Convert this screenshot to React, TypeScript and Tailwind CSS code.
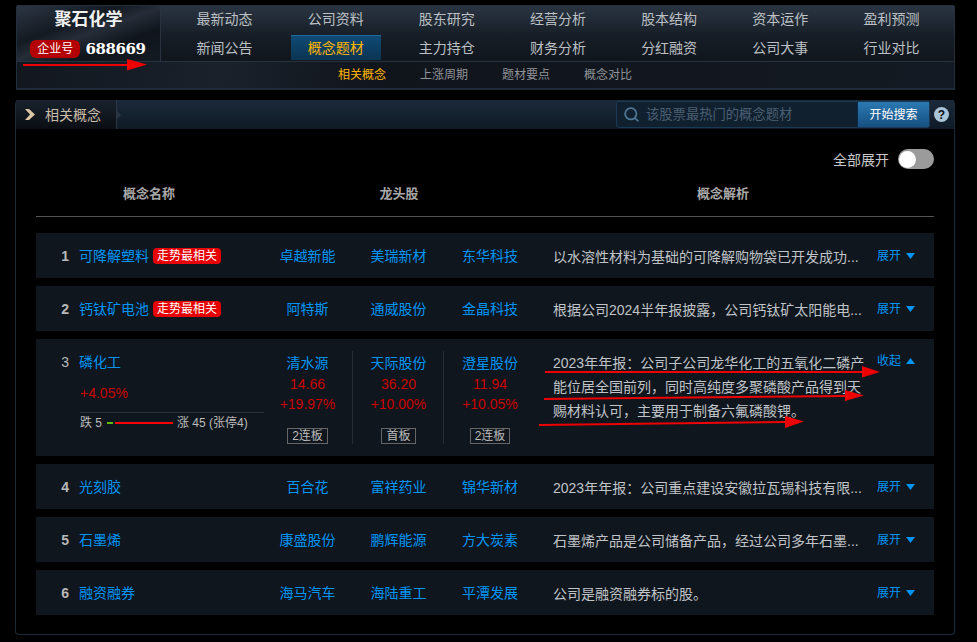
import { Search } from 'lucide-react';

const font = "font-['Liberation_Sans','Noto_Sans_CJK_SC',sans-serif]";

const navRows = [
    ['最新动态', '公司资料', '股东研究', '经营分析', '股本结构', '资本运作', '盈利预测'],
    ['新闻公告', '概念题材', '主力持仓', '财务分析', '分红融资', '公司大事', '行业对比'],
];

const subNav = ['相关概念', '上涨周期', '题材要点', '概念对比'];

const rows = [
    { id: 1, name: '可降解塑料', hot: true, stocks: ['卓越新能', '美瑞新材', '东华科技'], text: '以水溶性材料为基础的可降解购物袋已开发成功...' },
    { id: 2, name: '钙钛矿电池', hot: true, stocks: ['阿特斯', '通威股份', '金晶科技'], text: '根据公司2024半年报披露，公司钙钛矿太阳能电...' },
];

const rowsAfter = [
    { id: 4, name: '光刻胶', hot: false, stocks: ['百合花', '富祥药业', '锦华新材'], text: '2023年年报：公司重点建设安徽拉瓦锡科技有限...' },
    { id: 5, name: '石墨烯', hot: false, stocks: ['康盛股份', '鹏辉能源', '方大炭素'], text: '石墨烯产品是公司储备产品，经过公司多年石墨...' },
    { id: 6, name: '融资融券', hot: false, stocks: ['海马汽车', '海陆重工', '平潭发展'], text: '公司是融资融券标的股。' },
];

const openStocks = [
    { name: '清水源', price: '14.66', pct: '+19.97%', tag: '2连板' },
    { name: '天际股份', price: '36.20', pct: '+10.00%', tag: '首板' },
    { name: '澄星股份', price: '11.94', pct: '+10.05%', tag: '2连板' },
];

const gridCols = 'grid grid-cols-[43px_183px_91px_91px_92px_330px_68px]';

const Triangle = ({ up }: { up?: boolean }) => (
    <svg width="9" height="6" viewBox="0 0 9 6" className="fill-[#0095f5]">
        <path d={up ? 'M4.5 0L9 6H0z' : 'M0 0h9L4.5 6z'} />
    </svg>
);

const Row = ({ r }: { r: (typeof rows)[number] }) => (
    <div className={`${gridCols} h-[45px] items-center bg-[#0f161d] text-sm`}>
        <div className="pr-[10px] text-right font-bold text-[#b8b8b8]">{r.id}</div>
        <div className="flex items-center text-[#0095f5]">
            {r.name}
            {r.hot && (
                <span className="ml-1 flex h-4 w-[68px] items-center justify-center rounded-[4px] bg-[#e60000] text-xs text-white">
                    走势最相关
                </span>
            )}
        </div>
        {r.stocks.map(s => (
            <div key={s} className="text-center text-[#0095f5]">{s}</div>
        ))}
        <div className="pt-[2px] pl-[17px] whitespace-nowrap text-[#c0c4c8]">{r.text}</div>
        <div className="flex items-center gap-[5px] pl-[11px] text-xs text-[#0095f5]">
            展开 <Triangle />
        </div>
    </div>
);

export default function App() {
    return (
        <div className={`relative min-h-screen overflow-hidden bg-black pt-[5px] pb-[7px] ${font}`}>
            {/* top header */}
            <div className="ml-4 w-[939px] rounded-t-[2px] border border-[#232f3c] border-b-2 border-b-[#1e2b3a]">
                <div className="flex h-[56px] border-b border-[#263240] bg-[linear-gradient(180deg,#2a3542_0%,#161d26_55%,#11161d_100%)]">
                    <div className="flex w-[144px] flex-col items-center border-r border-[#29333f] bg-[linear-gradient(160deg,#2c3644_0%,#141a22_35%,#252d38_50%,#10151c_70%,#141a22_100%)]">
                        <div className="mt-[2px] h-6 text-[17px] leading-6 font-bold text-[#f0f0f0]">聚石化学</div>
                        <div className="mt-[6px] flex items-center gap-[5px] pr-px">
                            <span className="flex h-[18px] w-[50px] items-center justify-center rounded-[6px] bg-[#b30000] text-xs text-white">企业号</span>
                            <span className="font-['DejaVu_Serif',serif] text-[15px] font-bold tracking-[-0.4px] text-white">688669</span>
                        </div>
                    </div>
                    <div className="ml-[8px] grid w-[778px] grid-cols-7 grid-rows-[29px_25px] text-sm text-[#bcc0c4]">
                        {navRows.flat().map((item, i) => (
                            <div key={item} className={`flex items-center justify-center ${i < 7 ? 'pb-[3px]' : ''}`}>
                                {item === '概念题材' ? (
                                    <span className="flex h-[25px] w-[90px] items-center justify-center border-t border-b border-t-[#1f6a9c] border-b-[#0e3a58] bg-[linear-gradient(180deg,#0f4a74,#0b3554)] text-[#ffb400]">
                                        {item}
                                    </span>
                                ) : (
                                    item
                                )}
                            </div>
                        ))}
                    </div>
                </div>
                <div className="flex h-[26px] items-center bg-[linear-gradient(100deg,#12171f_0%,#1a212b_22%,#10141b_40%,#141a23_100%)] pl-[304px] text-xs text-[#8f9296]">
                    {subNav.map((s, i) => (
                        <div key={s} className={`w-[82px] text-center ${i === 0 ? 'text-[#ffb400]' : ''}`}>{s}</div>
                    ))}
                </div>
            </div>

            {/* concept panel */}
            <div className="mt-[10px] ml-[15px] h-[535px] w-[940px] rounded-[4px] border border-t-0 border-[#1c2a38]">
                <div className="flex h-[29px] items-center justify-between bg-[linear-gradient(180deg,#1b2a3a,#0f1a26)]">
                    <div className="relative flex h-full w-[101px] items-center border-r border-[#2a3644] bg-[linear-gradient(180deg,#19222d,#0a0e13)] pl-[9px] text-sm text-[#c9bda8]">
                        <svg width="10" height="11" viewBox="0 0 10 11" className="fill-[#dcc6a6]">
                            <path d="M0 0h4l6 5.500-6 5.500H0l5-5.500z" />
                        </svg>
                        <span className="ml-[10px]">相关概念</span>
                        <span className="absolute top-[11px] -right-[5px] h-0 w-0 border-y-[4px] border-l-[4px] border-y-transparent border-l-[#2a3644]" />
                    </div>
                    <div className="mr-[5px] flex items-center">
                        <div className="flex h-[27px] w-[314px] items-center rounded-[3px] border border-[#1b3a56] bg-[#10202f]">
                            <Search size={17} strokeWidth={2.5} className="ml-[6px] text-[#4f7596]" />
                            <span className="ml-[6px] flex-1 text-[13.3px] text-[#4b5f72]">该股票最热门的概念题材</span>
                            <span className="flex h-[25px] w-[72px] items-center justify-center border-l border-[#0b2a44] bg-[linear-gradient(180deg,#2b79b2,#174f80)] text-xs text-white">开始搜索</span>
                        </div>
                        <span className="ml-1 flex h-[15px] w-[15px] items-center justify-center rounded-full bg-[#a9c4d8] text-xs font-bold text-[#0b0f14]">?</span>
                    </div>
                </div>

                <div className="px-5">
                    <div className="flex h-10 items-end justify-end gap-[9px]">
                        <span className="-mb-px text-sm leading-[20px] text-[#c8c8c8]">全部展开</span>
                        <div className="flex h-5 w-9 items-center rounded-full bg-[#9b9b9b] pl-px">
                            <div className="h-[17px] w-[17px] rounded-full bg-white" />
                        </div>
                    </div>
                    <div className={`${gridCols} h-[48px] items-center border-b border-[#555] pt-[2px] text-[13px] font-bold text-[#a8a8a8]`}>
                        <div className="col-span-2 text-center">概念名称</div>
                        <div className="col-span-3 text-center">龙头股</div>
                        <div className="col-span-2 pr-[24px] text-center">概念解析</div>
                    </div>

                    <div className="mt-4 flex flex-col gap-2">
                        {rows.map(r => <Row key={r.id} r={r} />)}

                        {/* expanded row */}
                        <div className={`${gridCols} h-[117px] items-start bg-[#0f161d] pt-3 text-sm`}>
                            <div className="pr-[10px] text-right leading-[23px] text-[#b8b8b8]">3</div>
                            <div>
                                <div className="h-[23px] leading-[23px] text-[#0095f5]">磷化工</div>
                                <div className="mt-[9px] ml-px h-5 leading-5 text-[#cc0000]">+4.05%</div>
                                <div className="mt-[9px] ml-px flex h-[21px] w-[184px] items-center border-t border-[#2a3138] text-xs text-[#bbbbbb]">
                                    <span>跌 5</span>
                                    <span className="mr-[2px] ml-[5px] h-[2px] w-[6px] bg-[#5cb800]" />
                                    <span className="h-[2px] w-[58px] bg-[#ff0000]" />
                                    <span className="ml-[4px]">涨 45 (张停4)</span>
                                </div>
                            </div>
                            {openStocks.map((s, i) => (
                                <div key={s.name} className={`flex h-[93px] flex-col items-center ${i < 2 ? 'border-r border-[#262d35] pl-px' : ''}`}>
                                    <div className="h-6 leading-6 text-[#0095f5]">{s.name}</div>
                                    <div className="h-[19px] leading-[19px] text-[#cc0000]">{s.price}</div>
                                    <div className="h-5 leading-5 text-[#cc0000]">{s.pct}</div>
                                    <span className="mt-[14px] flex h-4 items-center border border-[#666] px-1 text-xs text-[#bbbbbb]">{s.tag}</span>
                                </div>
                            ))}
                            <div className="w-[330px] pl-[17px] leading-[24px] text-[#c0c4c8]">
                                <div className="w-[313px]">2023年年报：公司子公司龙华化工的五氧化二磷产能位居全国前列，同时高纯度多聚磷酸产品得到天赐材料认可，主要用于制备六氟磷酸锂。</div>
                            </div>
                            <div className="flex h-[19px] items-center gap-[5px] pl-[11px] text-xs text-[#0095f5]">
                                收起 <Triangle up />
                            </div>
                        </div>

                        {rowsAfter.map(r => <Row key={r.id} r={r} />)}
                    </div>
                </div>
            </div>

            {/* red annotation arrows */}
            <svg width="977" height="642" className="pointer-events-none absolute top-0 left-0 fill-[#ee0000]">
                <path d="M23 64L127 64V59L147 64.500L127 70.500V66L23 66z" />
                <path d="M545 371L862 371V366L880 372L862 377.500V373L545 373z" />
                <path d="M544 398L845 395V390L864 395.500L845 401V397L544 400z" />
                <path d="M539 424L785 421V416L804 421.500L785 428V423L539 426z" />
            </svg>
        </div>
    );
}
